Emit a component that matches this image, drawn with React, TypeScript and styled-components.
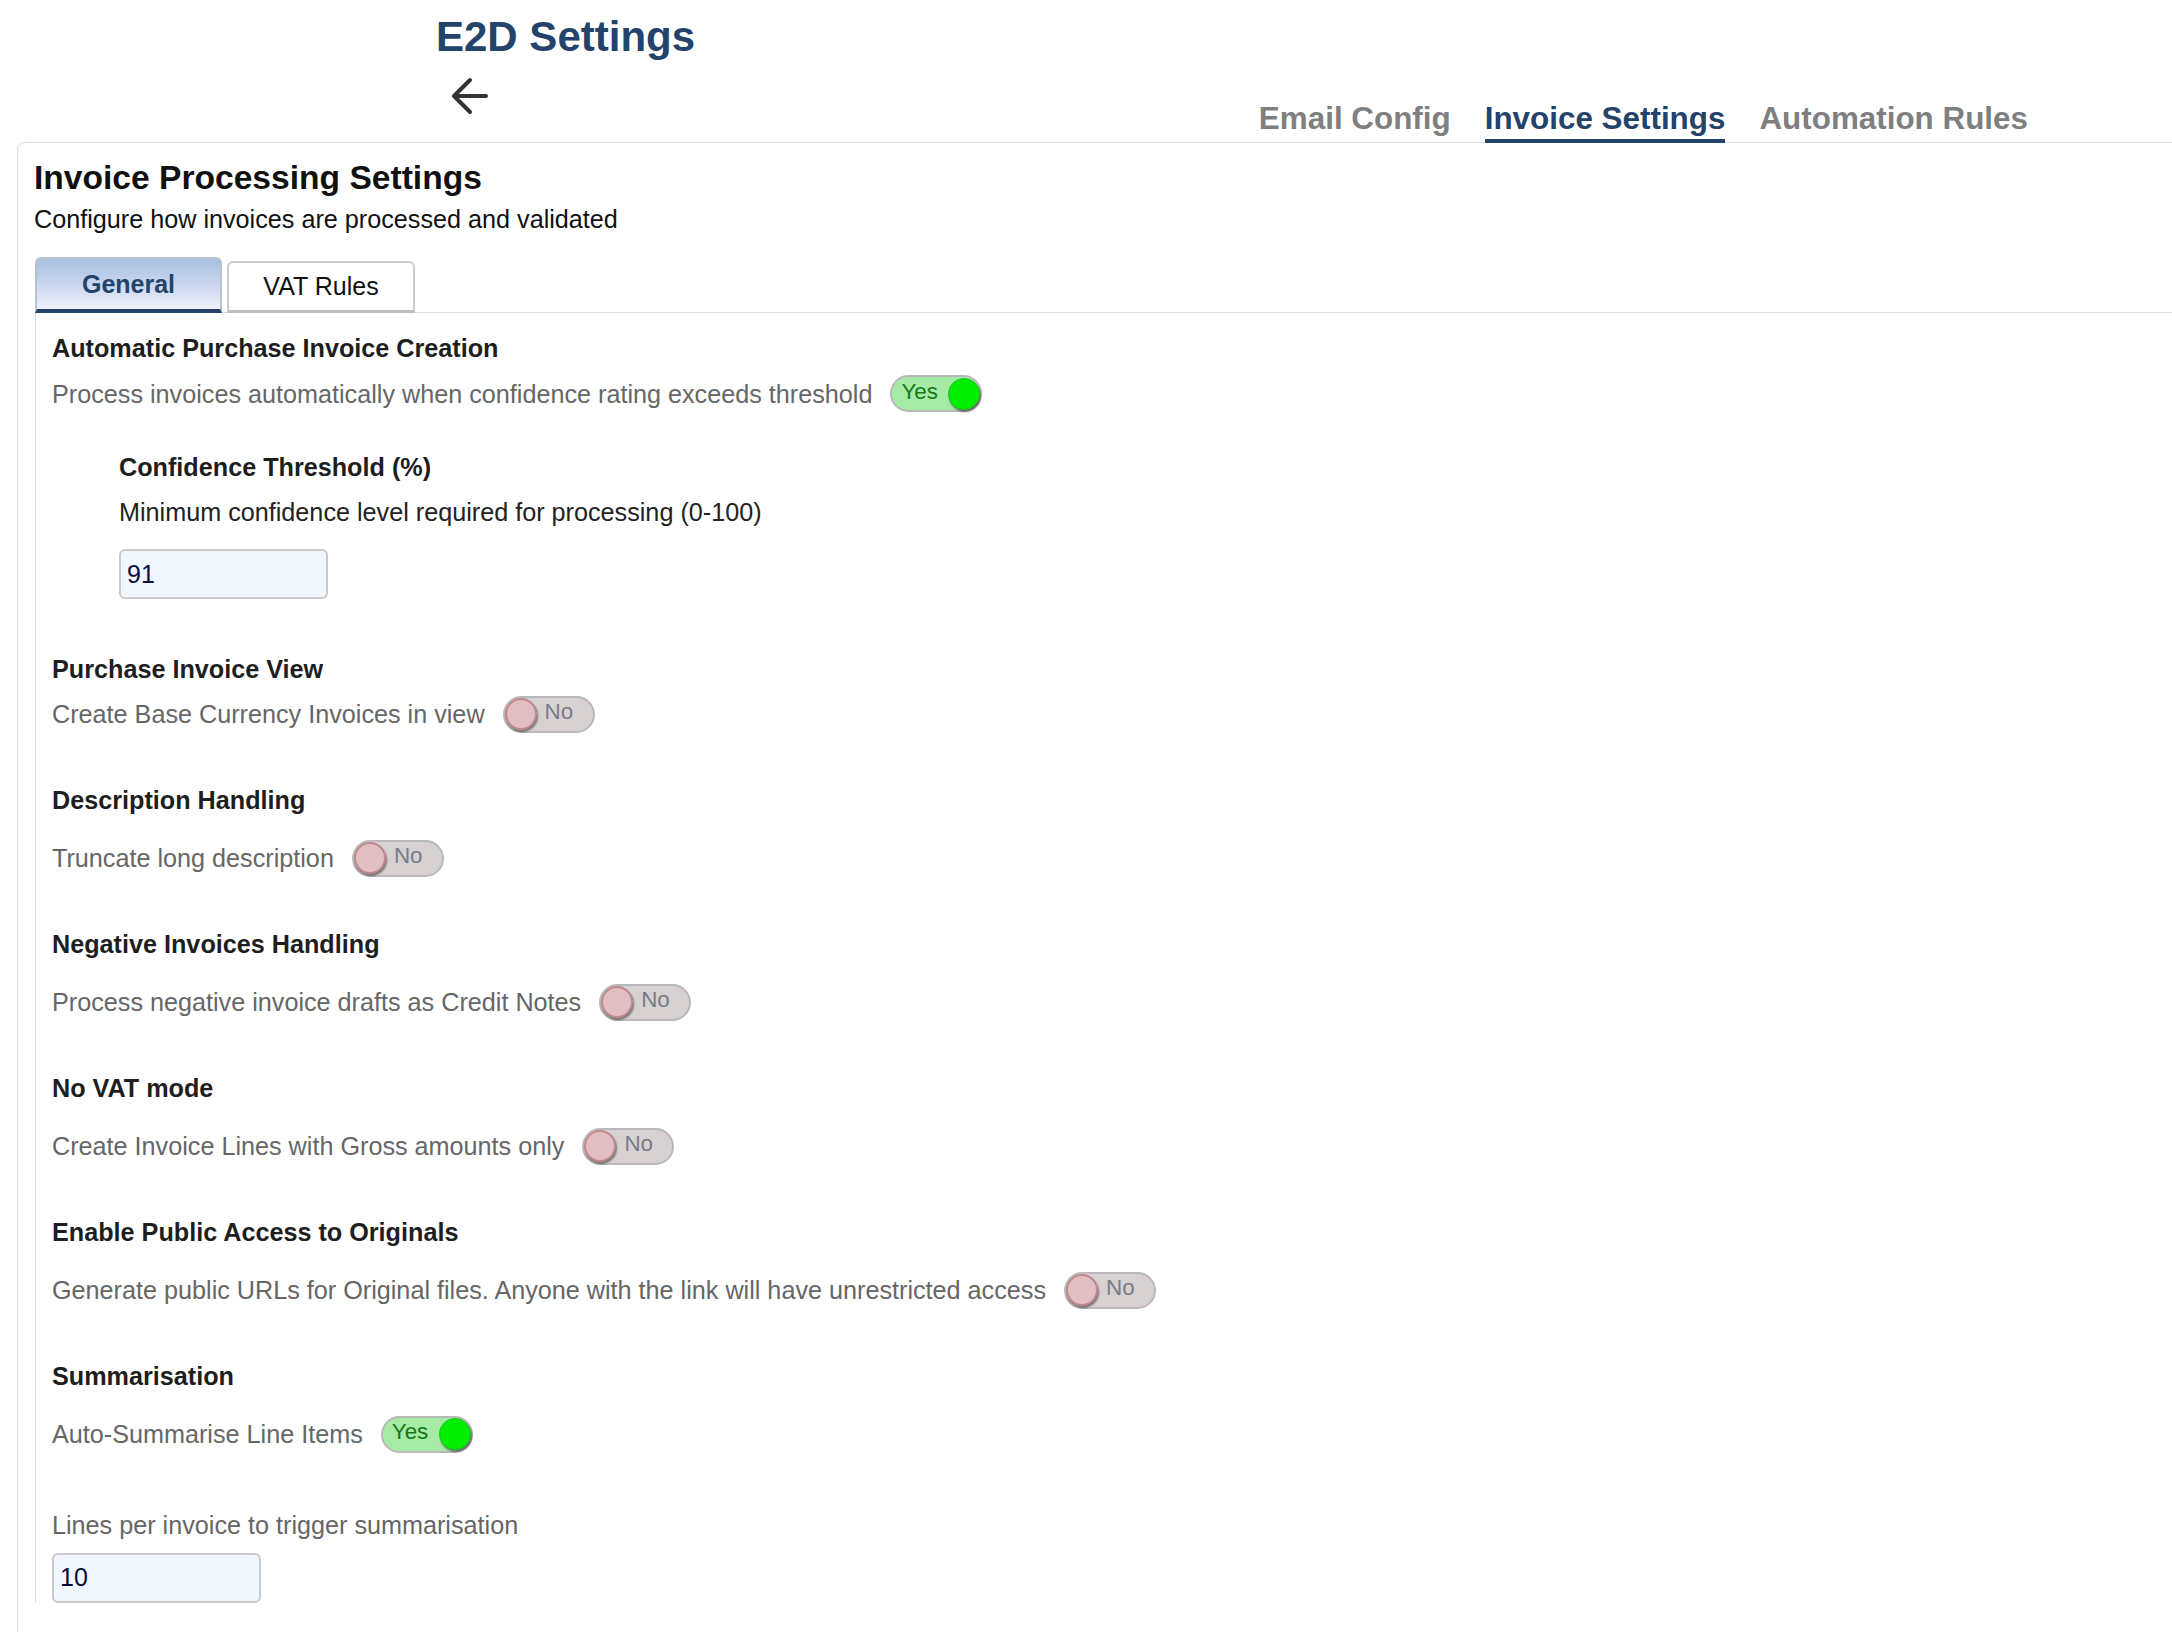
import React from 'react';
import styled, { createGlobalStyle } from 'styled-components';

const GlobalStyle = createGlobalStyle`
  * { box-sizing: border-box; }
  html, body {
    margin: 0;
    padding: 0;
    background: #fff;
    overflow: hidden;
  }
  body {
    font-family: "Liberation Sans", Arial, Helvetica, sans-serif;
  }
`;

type ToggleProps = { on: boolean };

const Toggle: React.FC<ToggleProps> = ({ on }) => (
  <ToggleTrack $on={on} role="switch" aria-checked={on}>
    <ToggleText $on={on}>{on ? 'Yes' : 'No'}</ToggleText>
    <Knob $on={on} />
  </ToggleTrack>
);

type SettingProps = {
  title: string;
  label: string;
  on: boolean;
  spaced?: boolean;
  children?: React.ReactNode;
};

const Setting: React.FC<SettingProps> = ({ title, label, on, spaced, children }) => (
  <Section $spaced={spaced}>
    <Heading>{title}</Heading>
    <Row>
      <RowLabel>{label}</RowLabel>
      <Toggle on={on} />
    </Row>
    {children}
  </Section>
);

const BackArrow = () => (
  <svg width="40" height="40" viewBox="0 0 40 40" fill="none" stroke="currentColor"
    strokeWidth="4" strokeLinecap="round" strokeLinejoin="round">
    <path d="M36 20H4M20 4 4 20l16 16" />
  </svg>
);

export default function App() {
  return (
    <Page>
      <GlobalStyle />
      <Header>
        <TitleBlock>
          <PageTitle>E2D Settings</PageTitle>
          <BackButton aria-label="Back">
            <BackArrow />
          </BackButton>
        </TitleBlock>
        <Nav>
          <NavItem>Email Config</NavItem>
          <NavItem $active>Invoice Settings</NavItem>
          <NavItem>Automation Rules</NavItem>
        </Nav>
      </Header>

      <Card>
        <CardTitle>Invoice Processing Settings</CardTitle>
        <CardSubtitle>Configure how invoices are processed and validated</CardSubtitle>

        <TabList>
          <Tab $active>General</Tab>
          <Tab>VAT Rules</Tab>
        </TabList>

        <Panel>
          <Setting
            title="Automatic Purchase Invoice Creation"
            label="Process invoices automatically when confidence rating exceeds threshold"
            on
          >
            <SubBlock>
              <Heading>Confidence Threshold (%)</Heading>
              <Field>
                <FieldText $dark>Minimum confidence level required for processing (0-100)</FieldText>
                <NumberInput $gap={22} defaultValue="91" />
              </Field>
            </SubBlock>
          </Setting>

          <Setting
            title="Purchase Invoice View"
            label="Create Base Currency Invoices in view"
            on={false}
          />
          <Setting spaced title="Description Handling" label="Truncate long description" on={false} />
          <Setting
            spaced
            title="Negative Invoices Handling"
            label="Process negative invoice drafts as Credit Notes"
            on={false}
          />
          <Setting spaced title="No VAT mode" label="Create Invoice Lines with Gross amounts only" on={false} />
          <Setting
            spaced
            title="Enable Public Access to Originals"
            label="Generate public URLs for Original files. Anyone with the link will have unrestricted access"
            on={false}
          />
          <Setting spaced title="Summarisation" label="Auto-Summarise Line Items" on>
            <Field $offset={32}>
              <FieldText>Lines per invoice to trigger summarisation</FieldText>
              <NumberInput $gap={13} defaultValue="10" />
            </Field>
          </Setting>
        </Panel>
      </Card>
    </Page>
  );
}

const Page = styled.div`
  height: 100vh;
  overflow: hidden;
`;

const Header = styled.header`
  height: 142px;
  display: flex;
  justify-content: space-between;
  align-items: flex-end;
  padding: 0 144px 0 436px;
`;

const TitleBlock = styled.div`
  align-self: flex-start;
  display: flex;
  flex-direction: column;
  padding-top: 16px;
`;

const PageTitle = styled.h1`
  margin: 0;
  font-size: 42px;
  line-height: 42px;
  font-weight: 700;
  color: #23436b;
`;

const BackButton = styled.button`
  margin: 18px 0 0 14px;
  width: 40px;
  height: 40px;
  padding: 0;
  border: 0;
  background: none;
  color: #333;
  display: flex;
  align-items: center;
  justify-content: center;
  cursor: pointer;
`;

const Nav = styled.nav`
  display: flex;
  gap: 34px;
`;

const NavItem = styled.a<{ $active?: boolean }>`
  font-size: 31.4px;
  font-weight: 700;
  line-height: 36px;
  padding-bottom: 2px;
  margin-bottom: -1px;
  color: ${({ $active }) => ($active ? '#23436b' : '#7f7f7f')};
  border-bottom: 4px solid ${({ $active }) => ($active ? '#23436b' : 'transparent')};
  cursor: pointer;
`;

const Card = styled.section`
  margin: 0 -12px 0 17px;
  border: 1px solid #d5dde5;
  border-radius: 8px;
  padding: 15px 0 60px 16px;
`;

const CardTitle = styled.h2`
  margin: 0;
  font-size: 33.6px;
  line-height: 40px;
  font-weight: 700;
  color: #111;
`;

const CardSubtitle = styled.p`
  margin: 6px 0 0;
  font-size: 25.2px;
  line-height: 30px;
  color: #111;
`;

const TabList = styled.div`
  margin: 23px 0 0 1px;
  display: flex;
  align-items: flex-end;
  gap: 5px;
  border-bottom: 1px solid #d5dde5;
`;

const Tab = styled.button<{ $active?: boolean }>`
  width: ${({ $active }) => ($active ? 187 : 188)}px;
  height: ${({ $active }) => ($active ? 56 : 52)}px;
  margin-bottom: -1px;
  display: flex;
  align-items: center;
  justify-content: center;
  font-family: inherit;
  font-size: 25px;
  font-weight: ${({ $active }) => ($active ? 700 : 400)};
  color: ${({ $active }) => ($active ? '#23436b' : '#111')};
  border: 2px solid ${({ $active }) => ($active ? '#b9c3cf' : '#cbcbcb')};
  border-bottom: ${({ $active }) => ($active ? '4px solid #23436b' : '3px solid #bfbfbf')};
  border-radius: 6px 6px 0 0;
  background: ${({ $active }) =>
    $active ? 'linear-gradient(180deg, #a8bee1 0%, #c9d6ee 50%, #eef1fa 100%)' : '#fff'};
  cursor: pointer;
`;

const Panel = styled.div`
  margin-left: 1px;
  border-left: 1px solid #d5dde5;
  padding: 20px 0 0 16px;
  display: flex;
  flex-direction: column;
  gap: 52px;
`;

const Section = styled.div<{ $spaced?: boolean }>`
  display: flex;
  flex-direction: column;
  align-items: flex-start;
  gap: ${({ $spaced }) => ($spaced ? 25 : 12)}px;
`;

const Heading = styled.h3`
  margin: 0;
  font-size: 25.2px;
  line-height: 30px;
  font-weight: 700;
  color: #1e1e1e;
`;

const Row = styled.div`
  display: flex;
  align-items: center;
  gap: 18px;
`;

const RowLabel = styled.span`
  font-size: 25.2px;
  line-height: 30px;
  color: #666;
`;

const SubBlock = styled.div`
  margin-top: 28px;
  padding: 0 0 2.5px 67px;
  display: flex;
  flex-direction: column;
  gap: 15px;
`;

const Field = styled.div<{ $offset?: number }>`
  margin-top: ${({ $offset }) => $offset ?? 0}px;
  display: flex;
  flex-direction: column;
  align-items: flex-start;
`;

const FieldText = styled.span<{ $dark?: boolean }>`
  font-size: 25.2px;
  line-height: 30px;
  color: ${({ $dark }) => ($dark ? '#222' : '#666')};
`;

const NumberInput = styled.input<{ $gap: number }>`
  margin-top: ${({ $gap }) => $gap}px;
  width: 209px;
  height: 50px;
  padding: 0 6px;
  border: 2px solid #cacaca;
  border-radius: 6px;
  background: #f0f7ff;
  font-family: inherit;
  font-size: 25px;
  color: #0b0b3b;
  outline: none;
`;

const ToggleTrack = styled.span<{ $on: boolean }>`
  display: inline-flex;
  flex-direction: ${({ $on }) => ($on ? 'row' : 'row-reverse')};
  justify-content: ${({ $on }) => ($on ? 'space-between' : 'flex-end')};
  align-items: center;
  gap: 8px;
  width: 92px;
  height: 37px;
  padding: ${({ $on }) => ($on ? '0 0 0 9px' : '0')};
  border: 2px solid #b9b9b9;
  border-radius: 19px;
  background: ${({ $on }) => ($on ? '#a5eba5' : '#d8d1d1')};
`;

const ToggleText = styled.span<{ $on: boolean }>`
  margin-bottom: 4px;
  font-size: 22.4px;
  line-height: 24px;
  color: ${({ $on }) => ($on ? '#17781a' : '#777c8a')};
`;

const Knob = styled.span<{ $on: boolean }>`
  flex: none;
  width: 32px;
  height: 32px;
  border-radius: 50%;
  background: ${({ $on }) => ($on ? '#00ee00' : '#e1bec1')};
  border: ${({ $on }) => ($on ? '1px solid #1fc21f' : '2px solid #c0888d')};
  box-shadow: 1px 2px 2px rgba(0, 0, 0, 0.45);
`;
